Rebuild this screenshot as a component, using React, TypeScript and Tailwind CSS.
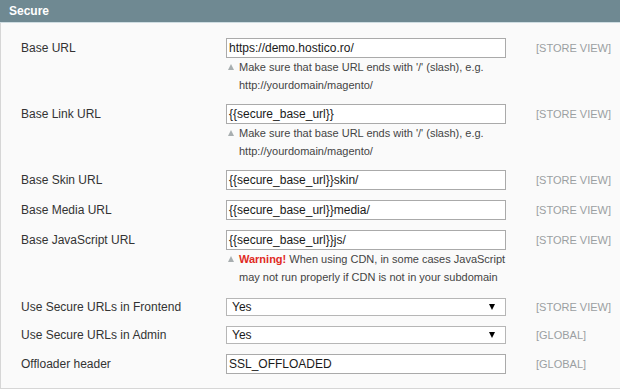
type Row = {
  label: string;
  value: string;
  scope: string;
  kind?: 'input' | 'select';
  note?: React.ReactNode;
  extra?: string;
};

const slashNote = (
  <>
    Make sure that base URL ends with '/' (slash), e.g.
    <br />
    http://yourdomain/magento/
  </>
);

const rows: Row[] = [
  { label: 'Base URL', value: 'https://demo.hostico.ro/', scope: '[STORE VIEW]', note: slashNote },
  { label: 'Base Link URL', value: '{{secure_base_url}}', scope: '[STORE VIEW]', note: slashNote },
  { label: 'Base Skin URL', value: '{{secure_base_url}}skin/', scope: '[STORE VIEW]' },
  { label: 'Base Media URL', value: '{{secure_base_url}}media/', scope: '[STORE VIEW]' },
  {
    label: 'Base JavaScript URL',
    value: '{{secure_base_url}}js/',
    scope: '[STORE VIEW]',
    extra: 'pb-[7px]',
    note: (
      <>
        <span className="font-bold text-[#e02a1f]">Warning!</span> When using CDN, in some cases JavaScript
        <br />
        may not run properly if CDN is not in your subdomain
      </>
    ),
  },
  { label: 'Use Secure URLs in Frontend', value: 'Yes', scope: '[STORE VIEW]', kind: 'select' },
  { label: 'Use Secure URLs in Admin', value: 'Yes', scope: '[GLOBAL]', kind: 'select' },
  { label: 'Offloader header', value: 'SSL_OFFLOADED', scope: '[GLOBAL]' },
];

function FieldRow({ row }: { row: Row }) {
  const isSelect = row.kind === 'select';
  return (
    <div className={`flex items-start pt-[5px] ${row.extra ?? 'pb-[5px]'}`}>
      <div className={`w-[225px] shrink-0 pl-[20px] text-[12px] text-[#333] ${isSelect ? 'leading-[18px]' : 'leading-[20px]'}`}>
        {row.label}
      </div>
      <div className="w-[280px] shrink-0">
        {isSelect ? (
          <div className="flex h-[18px] items-center justify-between border border-[#b6b6b6] bg-white pl-[5px] pr-[10px] text-[12px] text-[#1a1a1a]">
            <span>{row.value}</span>
            <span className="h-0 w-0 border-x-[3px] border-t-[6px] border-x-transparent border-t-black" />
          </div>
        ) : (
          <div className="flex h-[20px] items-center border border-[#aaaaaa] bg-white px-[2px] text-[12px] text-[#1a1a1a]">
            {row.value}
          </div>
        )}
        {row.note && (
          <div className="flex text-[11px] leading-[18px] text-[#444]">
            <div className="flex h-[18px] w-[13px] shrink-0 items-center pl-[2px]">
              <span className="h-0 w-0 border-x-[3.5px] border-b-[6px] border-x-transparent border-b-[#a8aeb0]" />
            </div>
            <span>{row.note}</span>
          </div>
        )}
      </div>
      <div className={`pl-[30px] text-[11px] text-[#9a9fa2] ${isSelect ? 'leading-[18px]' : 'leading-[20px]'}`}>
        {row.scope}
      </div>
    </div>
  );
}

export default function App() {
  return (
    <div className="w-full bg-white font-['Liberation_Sans',Arial,sans-serif]">
      <div className="flex h-[22px] items-center bg-[#6f8992] pl-[9px] text-[12px] font-bold text-white">
        Secure
      </div>
      <div className="h-px bg-[#cfdde2]" />
      <div className="border-b border-l border-[#d6d6d6] bg-[#fafafa] pt-[10px] pb-[9px]">
        {rows.map((row) => (
          <FieldRow key={row.label} row={row} />
        ))}
      </div>
    </div>
  );
}
